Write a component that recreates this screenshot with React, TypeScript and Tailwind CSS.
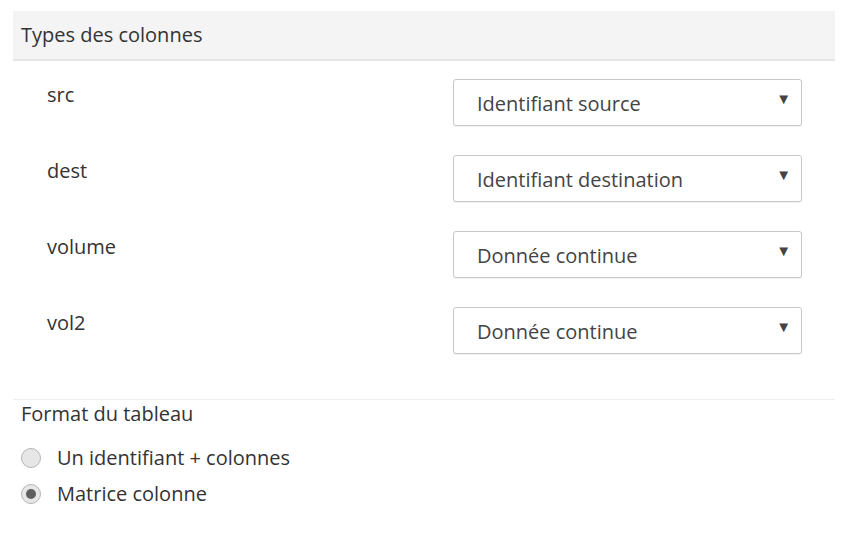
import { useState } from 'react';

const rows = [
  { name: 'src', type: 'Identifiant source' },
  { name: 'dest', type: 'Identifiant destination' },
  { name: 'volume', type: 'Donnée continue' },
  { name: 'vol2', type: 'Donnée continue' },
];

function Select({ value }: { value: string }) {
  return (
    <div className="relative w-[349px] h-[47px] border border-[#c8c8c8] rounded-[3px] bg-white flex items-center pl-[23px] shadow-[0_1px_1px_rgba(0,0,0,0.06)]">
      <span className="text-[20px] text-[#444] mt-[3px]">{value}</span>
      <span className="absolute right-[10px] top-[11px] text-[15px] text-[#444] leading-none">▼</span>
    </div>
  );
}

function Radio({ checked, label, onClick }: { checked: boolean; label: string; onClick: () => void }) {
  return (
    <label className="flex items-center h-[36px] cursor-pointer" onClick={onClick}>
      <span className="w-[20px] h-[20px] rounded-full border border-[#b5b5b5] bg-[#e6e6e6] flex items-center justify-center ml-[21px]">
        {checked && <span className="w-[10px] h-[10px] rounded-full bg-[#5e5e5e]" />}
      </span>
      <span className="ml-[16px] text-[20px] text-[#333]">{label}</span>
    </label>
  );
}

export default function App() {
  const [format, setFormat] = useState('matrice');
  return (
    <div className="w-[849px] h-[534px] bg-white font-['Open_Sans',sans-serif] text-[#333]">
      <div className="pt-[11px] pl-[13px] pr-[14px]">
        <div className="h-[50px] bg-[#f4f4f4] border-b-2 border-[#e6e6e6] flex items-center pl-[8px]">
          <span className="text-[20px] text-[#333]">Types des colonnes</span>
        </div>
        <div className="flex flex-col gap-[29px] pt-[18px] pb-[45px]">
          {rows.map((r) => (
            <div key={r.name} className="flex items-start justify-between pr-[33px]">
              <span className="ml-[34px] text-[20px] text-[#333] leading-[28px] mt-[2px]">{r.name}</span>
              <Select value={r.type} />
            </div>
          ))}
        </div>
        <div className="border-t border-[#eeeeee]" />
      </div>
      <div className="pl-[21px] text-[20px] leading-[28px] text-[#333]">Format du tableau</div>
      <div className="flex flex-col pt-[12px]">
        <Radio checked={format === 'id'} label="Un identifiant + colonnes" onClick={() => setFormat('id')} />
        <Radio checked={format === 'matrice'} label="Matrice colonne" onClick={() => setFormat('matrice')} />
      </div>
    </div>
  );
}
